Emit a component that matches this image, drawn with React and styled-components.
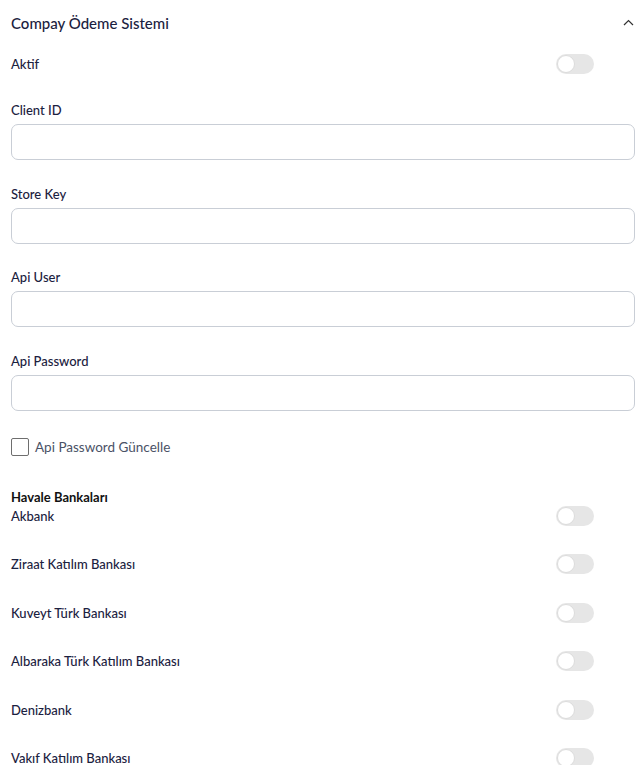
import styled, { createGlobalStyle } from "styled-components";

const GlobalStyle = createGlobalStyle`
  body {
    margin: 0;
    background: #ffffff;
    font-family: "Lato", "Inter", sans-serif;
    color: #1b2140;
  }
`;

const fields = ["Client ID", "Store Key", "Api User", "Api Password"];

const banks = [
  "Akbank",
  "Ziraat Katılım Bankası",
  "Kuveyt Türk Bankası",
  "Albaraka Türk Katılım Bankası",
  "Denizbank",
  "Vakıf Katılım Bankası",
];

export default function App() {
  return (
    <>
      <GlobalStyle />
      <Panel>
        <Header>
          <Title>Compay Ödeme Sistemi</Title>
          <svg width="11" height="7" viewBox="0 0 11 7">
            <path d="M1 6 L5.5 1.5 L10 6" fill="none" stroke="#333" strokeWidth="1.2" />
          </svg>
        </Header>

        <ToggleRow $top={8}>
          <Label>Aktif</Label>
          <Toggle />
        </ToggleRow>

        <Fields>
          {fields.map((f) => (
            <Field key={f}>
              <Label>{f}</Label>
              <Input />
            </Field>
          ))}
        </Fields>

        <CheckRow>
          <Box />
          <CheckText>Api Password Güncelle</CheckText>
        </CheckRow>

        <SectionTitle>Havale Bankaları</SectionTitle>
        <BankList>
          {banks.map((b) => (
            <ToggleRow key={b}>
              <Label>{b}</Label>
              <Toggle />
            </ToggleRow>
          ))}
        </BankList>
      </Panel>
    </>
  );
}

const Panel = styled.div`
  padding: 0 4px 0 11px;
  height: 765px;
  overflow: hidden;
  display: flex;
  flex-direction: column;
  & > * {
    flex-shrink: 0;
  }
`;

const Header = styled.div`
  display: flex;
  align-items: center;
  justify-content: space-between;
  height: 46px;
  padding-right: 1px;
  svg {
    margin-top: -2px;
  }
`;

const Title = styled.div`
  font-size: 15px;
  font-weight: 500;
  color: #1b2140;
`;

const Label = styled.div`
  font-size: 13px;
  font-weight: 500;
  color: #1b2140;
  line-height: 20px;
`;

const ToggleRow = styled.div`
  display: flex;
  align-items: center;
  justify-content: space-between;
  padding-right: 41px;
  margin-top: ${(p) => p.$top || 0}px;
`;

const Toggle = styled.div`
  width: 38px;
  height: 20px;
  border-radius: 10px;
  background: #e6e6e6;
  position: relative;
  &::after {
    content: "";
    position: absolute;
    left: 1px;
    top: 1px;
    width: 16px;
    height: 16px;
    border-radius: 50%;
    background: #fff;
    border: 1px solid #dcdcdc;
  }
`;

const Fields = styled.div`
  display: flex;
  flex-direction: column;
  gap: 23.7px;
  margin-top: 26px;
`;

const Field = styled.div`
  display: flex;
  flex-direction: column;
  gap: 4px;
`;

const Input = styled.div`
  height: 34px;
  border: 1px solid #c9ced6;
  border-radius: 7px;
  background: #fff;
`;

const CheckRow = styled.div`
  display: flex;
  align-items: center;
  gap: 6px;
  margin-top: 27px;
`;

const Box = styled.div`
  width: 16px;
  height: 16px;
  border: 1px solid #6e6e6e;
  border-radius: 2px;
`;

const CheckText = styled.div`
  font-size: 13.5px;
  color: #4a5266;
`;

const SectionTitle = styled.div`
  font-size: 13px;
  font-weight: 700;
  color: #111;
  margin-top: 32px;
  line-height: 18px;
`;

const BankList = styled.div`
  display: flex;
  flex-direction: column;
  gap: 28.4px;
`;
